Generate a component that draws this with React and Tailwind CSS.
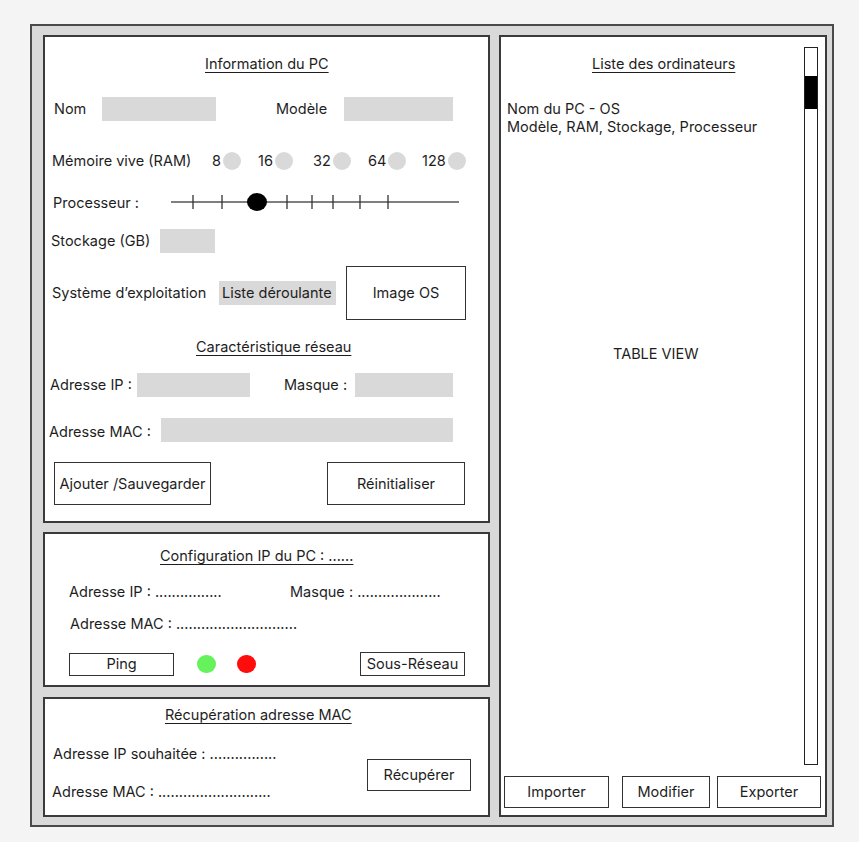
import React from "react";

const FONT = "font-['Inter','Liberation_Sans',sans-serif]";

function Field({ w, h = 24, children, className = "" }) {
  return (
    <div className={`bg-[#d9d9d9] shrink-0 ${className}`} style={{ width: w, height: h }}>
      {children}
    </div>
  );
}

function Btn({ w, h, className = "", children }) {
  return (
    <div
      className={`shrink-0 flex items-center justify-center border-[1.5px] border-[#333] bg-white ${className}`}
      style={{ width: w, height: h }}
    >
      {children}
    </div>
  );
}

function Title({ pl, children }) {
  return (
    <div style={{ paddingLeft: pl }}>
      <span className="underline underline-offset-[3px] decoration-[1px]">{children}</span>
    </div>
  );
}

function Slider() {
  const ticks = [22, 51, 116, 141, 162, 189, 217];
  return (
    <svg width="292" height="22" className="shrink-0">
      <line x1="0" y1="11" x2="288" y2="11" stroke="#555" strokeWidth="1.5" />
      {ticks.map(x => (
        <line key={x} x1={x} y1="4" x2={x} y2="18" stroke="#333" strokeWidth="1.3" />
      ))}
      <ellipse cx="86" cy="11" rx="10" ry="9" fill="#000" />
    </svg>
  );
}

const ramOptions = [
  { v: "8", w: 46 },
  { v: "16", w: 55 },
  { v: "32", w: 55 },
  { v: "64", w: 54 },
  { v: "128", w: 55 },
];

export default function App() {
  return (
    <div className={`min-h-[842px] bg-[#f4f4f4] pt-[24px] pl-[30px] text-[14.5px] leading-[20px] text-[#1e1e1e] ${FONT}`}>
      <div className="w-[804px] h-[803px] border-2 border-[#4a4a4a] bg-[#d9d9d9] pl-[11px] pt-[9px] flex gap-[9px]">
        {/* left column */}
        <div className="w-[447px] flex flex-col">
          {/* PC info */}
          <div className="h-[488px] border-2 border-[#3a3a3a] bg-white pt-[17px]">
            <Title pl={160}>Information du PC</Title>

            <div className="flex items-center mt-[23px] pl-[9px]">
              <span className="w-[48px]">Nom</span>
              <Field w={114} />
              <span className="ml-[60px] w-[68px]">Modèle</span>
              <Field w={109} />
            </div>

            <div className="flex items-center mt-[30px] pl-[7px] h-[20px]">
              <span className="w-[160px] shrink-0">Mémoire vive (RAM)</span>
              {ramOptions.map(o => (
                <div key={o.v} className="flex items-center gap-[2px] shrink-0" style={{ width: o.w }}>
                  <span>{o.v}</span>
                  <span className="w-[18px] h-[18px] rounded-full bg-[#d9d9d9]" />
                </div>
              ))}
            </div>

            <div className="flex items-center mt-[20px] pl-[8px]">
              <span className="w-[118px] shrink-0 pt-[2px]">Processeur :</span>
              <Slider />
            </div>

            <div className="flex items-center mt-[16px] pl-[6px]">
              <span className="w-[109px] shrink-0">Stockage (GB)</span>
              <Field w={55} />
            </div>

            <div className="flex items-center mt-[13px] pl-[7px]">
              <span className="w-[167px] shrink-0">Système d’exploitation</span>
              <Field w={117} className="pl-[3px] flex items-center">Liste déroulante</Field>
              <Btn w={120} h={54} className="ml-[10px]">Image OS</Btn>
            </div>

            <div className="mt-[17px]">
              <Title pl={151}>Caractéristique réseau</Title>
            </div>

            <div className="flex items-center mt-[16px] pl-[5px]">
              <span className="w-[87px] shrink-0">Adresse IP :</span>
              <Field w={113} />
              <span className="ml-[34px] w-[71px] shrink-0">Masque :</span>
              <Field w={98} />
            </div>

            <div className="flex items-center mt-[21px] pl-[4px]">
              <span className="w-[112px] shrink-0 pt-[4px]">Adresse MAC :</span>
              <Field w={292} />
            </div>

            <div className="flex items-center mt-[20px] pl-[9px]">
              <Btn w={157} h={43}>Ajouter /Sauvegarder</Btn>
              <Btn w={138} h={43} className="ml-[116px]">Réinitialiser</Btn>
            </div>
          </div>

          {/* IP config */}
          <div className="h-[155px] mt-[9px] border-2 border-[#3a3a3a] bg-white pt-[12px]">
            <Title pl={115}>Configuration IP du PC : ......</Title>
            <div className="flex mt-[16px] pl-[24px]">
              <span className="w-[221px] shrink-0">Adresse IP : ................</span>
              <span>Masque : ....................</span>
            </div>
            <div className="mt-[12px] pl-[25px]">Adresse MAC : .............................</div>
            <div className="flex items-center mt-[18px] pl-[24px]">
              <Btn w={105} h={23}>Ping</Btn>
              <span className="ml-[23px] w-[19px] h-[18px] rounded-full bg-[#66f25a]" />
              <span className="ml-[21px] w-[19px] h-[18px] rounded-full bg-[#ff0c0c]" />
              <Btn w={105} h={24} className="ml-[104px]">Sous-Réseau</Btn>
            </div>
          </div>

          {/* MAC */}
          <div className="h-[120px] mt-[10px] border-2 border-[#3a3a3a] bg-white pt-[6px]">
            <Title pl={120}>Récupération adresse MAC</Title>
            <div className="flex items-center mt-[19px]">
              <div className="flex flex-col gap-[18px] pl-[8px]">
                <span>Adresse IP souhaitée : ................</span>
                <span className="-ml-px">Adresse MAC : ...........................</span>
              </div>
              <Btn w={104} h={32} className="ml-auto mr-[17px] mt-[3px]">Récupérer</Btn>
            </div>
          </div>
        </div>

        {/* right column */}
        <div className="w-[328px] h-[782px] border-2 border-[#3a3a3a] bg-white flex flex-col">
          <div className="flex h-[728px]">
            <div className="flex-1 pt-[17px]">
              <Title pl={91}>Liste des ordinateurs</Title>
              <div className="mt-[26px] pl-[6px] leading-[18px]">
                <div>Nom du PC - OS</div>
                <div>Modèle, RAM, Stockage, Processeur</div>
              </div>
              <div className="mt-[208px] pl-[112px]">TABLE VIEW</div>
            </div>
            <div className="w-[14px] h-[718px] mt-[10px] mr-[7px] border-[1.5px] border-[#222] bg-white pt-[28px]">
              <div className="h-[33px] bg-black" />
            </div>
          </div>
          <div className="flex items-center mt-[11px] pl-[3px]">
            <Btn w={105} h={32}>Importer</Btn>
            <Btn w={88} h={32} className="ml-[13px]">Modifier</Btn>
            <Btn w={104} h={32} className="ml-[7px]">Exporter</Btn>
          </div>
        </div>
      </div>
    </div>
  );
}
